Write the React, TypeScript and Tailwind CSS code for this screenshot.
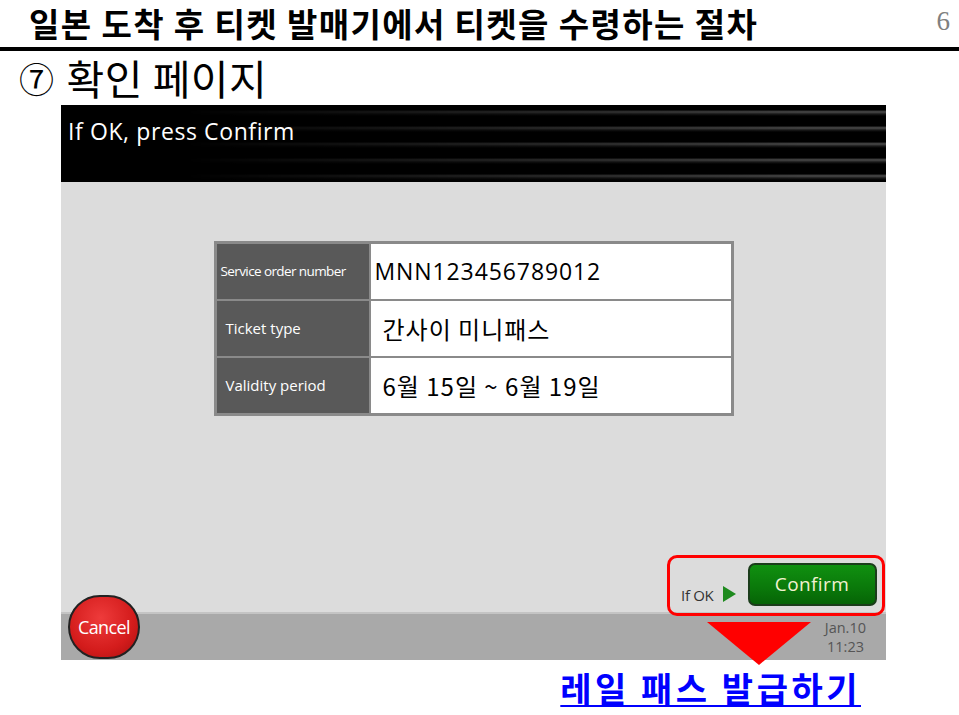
import React from "react";

const KR = "font-['Noto_Sans_CJK_KR',sans-serif]";
const UI = "font-['Open_Sans','Noto_Sans_CJK_KR',sans-serif]";

const rows = [
  { label: "Service order number", value: "MNN123456789012", small: true },
  { label: "Ticket type", value: "간사이 미니패스", small: false },
  { label: "Validity period", value: "6월 15일 ~ 6월 19일", small: false },
];

function OrderTable() {
  return (
    <div className="w-[520px] border-[3px] border-[#8a8a8a] bg-[#8a8a8a] flex flex-col gap-[2px]">
      {rows.map((r) => (
        <div key={r.label} className="flex h-[55px] gap-[2px]">
          <div
            className={`w-[152px] bg-[#595959] flex items-center text-white whitespace-nowrap ${UI} ${
              r.small ? "text-[13.5px] tracking-[-0.6px] pl-[4px]" : "text-[15px] pl-[9px]"
            }`}
          >
            {r.label}
          </div>
          <div
            className={`flex-1 bg-white flex items-center text-black ${
              r.small ? `${UI} text-[23px] pl-[4px] tracking-[0.9px]` : `${KR} text-[24px] pl-[12px] tracking-[1px]`
            }`}
          >
            {r.value}
          </div>
        </div>
      ))}
    </div>
  );
}

export default function App() {
  return (
    <div className="w-[959px] h-[715px] bg-white overflow-hidden relative">
      <div className="flex items-start justify-between h-[47px] pl-[29px] pr-[9px]">
        <h1 className={`${KR} font-bold text-[33px] leading-[47px] tracking-[1.4px] text-black whitespace-nowrap shrink-0`}>
          일본 도착 후 티켓 발매기에서 티켓을 수령하는 절차
        </h1>
        <span className="font-['Liberation_Serif',serif] text-[27px] leading-[42px] text-[#808080]">6</span>
      </div>
      <div className="h-[4px] bg-black" />
      <div className={`${KR} pl-[19px] h-[54px] flex items-center text-[41px] text-black tracking-[0.5px] whitespace-nowrap`}>
        <span className="text-[35px] mr-[12px]">⑦</span>
        <span>확인 페이지</span>
      </div>

      <div className="ml-[61px] w-[825px] h-[555px] relative flex flex-col">
        <div className="h-[77px] bg-black relative overflow-hidden">
          <div className="absolute inset-0 bg-[repeating-linear-gradient(to_bottom,#000_0px,#000_5px,#333_6px,#4a4a4a_7px,#1a1a1a_9px,#000_11px,#000_16px)] [mask-image:linear-gradient(to_right,transparent_15%,black_90%)]" />
          <p className={`relative ${UI} text-white text-[23px] tracking-[0.6px] pl-[7px] pt-[9px]`}>If OK, press Confirm</p>
        </div>
        <div className="flex-1 bg-[#dcdcdc] flex justify-center items-start pt-[59px]">
          <OrderTable />
        </div>
        <div className="h-[48px] bg-[#a9a9a9] border-t-[2px] border-[#c4c4c4] flex flex-col items-end justify-center pr-[20px]">
          <span className={`${UI} text-[14.5px] leading-[19px] text-[#555]`}>Jan.10</span>
          <span className={`${UI} text-[14.5px] leading-[19px] text-[#555] pr-[2px]`}>11:23</span>
        </div>

        <div className="absolute left-[7px] top-[490px] w-[72px] h-[64px] rounded-full bg-[radial-gradient(circle_at_45%_35%,#ee3b3b,#d41c1c_60%,#a81010)] border-[2px] border-[#222] flex items-center justify-center">
          <span className={`${UI} text-white text-[18px] tracking-[-0.6px]`}>Cancel</span>
        </div>

        <div className="absolute left-[606px] top-[450px] w-[218px] h-[61px] rounded-[10px] border-[3px] border-[#ff0000] flex items-end pl-[11px] pb-[8px]">
          <span className={`${UI} text-[15px] text-[#333] tracking-[-0.3px] mb-[-1px] whitespace-nowrap`}>If OK</span>
          <svg width="13" height="16" viewBox="0 0 13 16" className="ml-[9px] mb-[3px] shrink-0">
            <polygon points="0,0 13,8 0,16" fill="#1e8a1e" />
          </svg>
          <div className="ml-[12px] mb-[-1px] w-[129px] h-[43px] shrink-0 rounded-[7px] border-[2px] border-[#1b3d1b] bg-[linear-gradient(to_bottom,#109010,#0a780a_60%,#066406)] flex items-center justify-center">
            <span className={`${UI} text-[#f2f2d0] text-[19px] tracking-[0.4px]`}>Confirm</span>
          </div>
        </div>

        <svg width="104" height="43" viewBox="0 0 104 43" className="absolute left-[646px] top-[517px]">
          <polygon points="0,0 104,0 52,43" fill="#ff0000" />
        </svg>
      </div>

      <div className="flex justify-end pr-[98px] pt-[8px]">
        <a className={`${KR} font-bold text-[34px] leading-[40px] text-[#0000ff] underline underline-offset-[3px] decoration-[2px] tracking-[3.5px] whitespace-nowrap`}>
          레일 패스 발급하기
        </a>
      </div>
    </div>
  );
}
